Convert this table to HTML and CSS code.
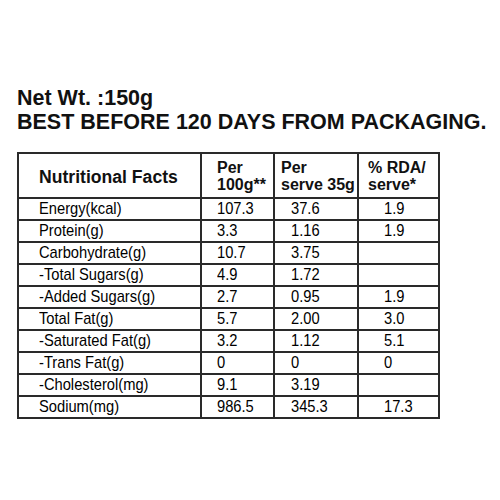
FILE: index.html
```html
<!DOCTYPE html>
<html>
	<head>
		<meta charset="UTF-8">
		<title>Nutritional Facts</title>
		<link rel="stylesheet" href="styles.css">
	</head>
	<body>
		<div class="label">
			<h1 class="pack-info">
				Net Wt. :150g<br>
				BEST BEFORE 120 DAYS FROM PACKAGING.
			</h1>
			<table id="facts">
				<colgroup>
					<col class="c-name">
					<col class="c-100">
					<col class="c-serve">
					<col class="c-rda">
				</colgroup>
				<tr class="head">
					<th class="title">Nutritional Facts</th>
					<th class="h-100">Per<br>100g**</th>
					<th class="h-serve">Per<br>serve 35g</th>
					<th class="h-rda">% RDA/<br>serve*</th>
				</tr>
				<tr><td><span>Energy(kcal)</span></td><td><span>107.3</span></td><td><span>37.6</span></td><td><span>1.9</span></td></tr>
				<tr><td><span>Protein(g)</span></td><td><span>3.3</span></td><td><span>1.16</span></td><td><span>1.9</span></td></tr>
				<tr><td><span>Carbohydrate(g)</span></td><td><span>10.7</span></td><td><span>3.75</span></td><td></td></tr>
				<tr><td><span>-Total Sugars(g)</span></td><td><span>4.9</span></td><td><span>1.72</span></td><td></td></tr>
				<tr><td><span>-Added Sugars(g)</span></td><td><span>2.7</span></td><td><span>0.95</span></td><td><span>1.9</span></td></tr>
				<tr><td><span>Total Fat(g)</span></td><td><span>5.7</span></td><td><span>2.00</span></td><td><span>3.0</span></td></tr>
				<tr><td><span>-Saturated Fat(g)</span></td><td><span>3.2</span></td><td><span>1.12</span></td><td><span>5.1</span></td></tr>
				<tr><td><span>-Trans Fat(g)</span></td><td><span>0</span></td><td><span>0</span></td><td><span>0</span></td></tr>
				<tr><td><span>-Cholesterol(mg)</span></td><td><span>9.1</span></td><td><span>3.19</span></td><td></td></tr>
				<tr><td><span>Sodium(mg)</span></td><td><span>986.5</span></td><td><span>345.3</span></td><td><span>17.3</span></td></tr>
			</table>
		</div>
	</body>
</html>
```

FILE: styles.css
```css
body {
	margin: 0;
	background: #fff;
	color: #111;
	font-family: "Liberation Sans", Arial, sans-serif;
}
.label {
	padding: 86px 0 0 17px;
}
.pack-info {
	margin: 0 0 18px 0;
	font-size: 21.5px;
	line-height: 24px;
	font-weight: bold;
}
#facts {
	border-collapse: collapse;
	width: 421px;
	table-layout: fixed;
}
.c-name { width: 183px; }
.c-100 { width: 73px; }
.c-serve { width: 84px; }
.c-rda { width: 81px; }
#facts th, #facts td {
	border: 2px solid #2a2a2a;
	text-align: left;
	white-space: nowrap;
	vertical-align: middle;
}
#facts th {
	height: 39px;
	padding: 0;
	font-size: 16px;
	line-height: 17px;
	font-weight: bold;
}
#facts th.title {
	padding-left: 20px;
	padding-top: 4px;
	font-size: 17.6px;
}
#facts th.h-100 { padding-left: 15px; }
#facts th.h-serve { padding-left: 6px; }
#facts th.h-rda { padding-left: 9px; }
#facts td {
	height: 20px;
	padding: 0 0 0 15px;
	color: #000;
	font-size: 17px;
	line-height: 20px;
}
#facts td span {
	display: inline-block;
	transform: scaleX(0.865);
	transform-origin: left center;
}
#facts td:first-child { padding-left: 20px; }
#facts td:nth-child(3) { padding-left: 16px; }
#facts td:nth-child(4) { padding-left: 25px; }
```
